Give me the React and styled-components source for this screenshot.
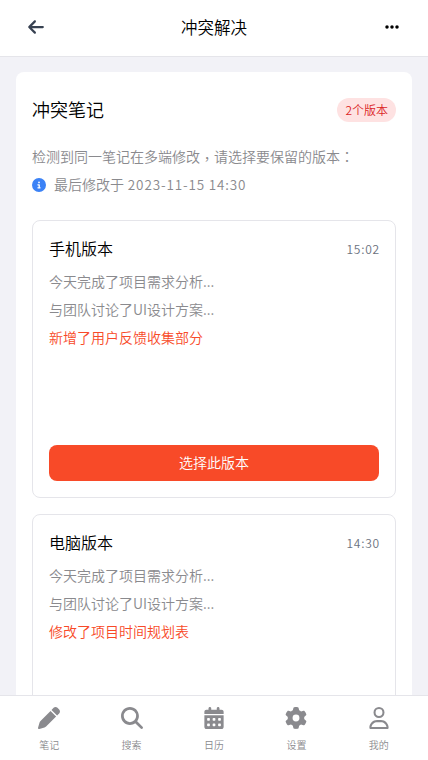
import React from 'react'
import styled, { createGlobalStyle } from 'styled-components'
import {
  FaArrowLeft,
  FaCalendarDays,
  FaCircleInfo,
  FaEllipsis,
  FaGear,
  FaMagnifyingGlass,
  FaPen,
  FaRegUser,
} from 'react-icons/fa6'

const GlobalStyle = createGlobalStyle`
  * {
    box-sizing: border-box;
  }
  body {
    margin: 0;
    background: #f2f2f7;
    color: #000;
    font-family: "Noto Sans CJK SC", sans-serif;
    font-weight: 350;
  }
`

const Screen = styled.div`
  display: flex;
  flex-direction: column;
  height: 760px;
  overflow: hidden;
`
const Header = styled.header`
  display: flex;
  flex: none;
  align-items: center;
  justify-content: space-between;
  height: 57px;
  padding: 0 28px 2px 27px;
  background: #fff;
  border-bottom: 1px solid #e5e5ea;
`
const HeaderTitle = styled.h1`
  margin: 0 1px 0 0;
  font-size: 16.5px;
  font-weight: 350;
  line-height: 24px;
`
const IconButton = styled.button`
  display: flex;
  padding: 0;
  border: none;
  background: none;
  color: ${(props) => props.$color};
  font-size: ${(props) => props.$size}px;
`
const Main = styled.main`
  flex: 1;
  min-height: 0;
  padding: 15px 16px 0;
  overflow: hidden;
`
const Panel = styled.section`
  padding: 16px;
  background: #fff;
  border-radius: 8px;
`
const PanelHeader = styled.div`
  display: flex;
  align-items: center;
  justify-content: space-between;
  height: 44px;
  margin-bottom: 10px;
`
const PanelTitle = styled.h2`
  margin: 0;
  padding-bottom: 2px;
  font-size: 18px;
  font-weight: 350;
`
const Badge = styled.span`
  height: 24px;
  padding: 0 8px;
  border-radius: 12px;
  background: #fee2e2;
  color: #dc2626;
  font-size: 12px;
  line-height: 23px;
`
const Latin = styled.span`
  font-size: 0.965em;
  letter-spacing: 0.063em;
`
const Text = styled.p`
  display: flex;
  align-items: center;
  gap: 8px;
  height: 28px;
  margin: 0;
  color: ${(props) => (props.$changed ? '#f84a28' : '#8a8a8e')};
  font-size: 14px;
  line-height: 28px;
  white-space: pre;
`
const Comma = styled.span`
  font-family: "Noto Sans CJK TC", sans-serif;
  line-height: 1;
  vertical-align: -2px;
`
const Colon = styled.span`
  font-family: "Noto Sans CJK TC", sans-serif;
`
const InfoIcon = styled(FaCircleInfo)`
  margin-top: 1px;
  color: #3b82f6;
  font-size: 14px;
`
const VersionList = styled.div`
  display: flex;
  flex-direction: column;
  gap: 16px;
  margin-top: 22px;
`
const VersionCard = styled.article`
  display: flex;
  flex-direction: column;
  height: 278px;
  padding: 15px 16px 16px;
  border: 1px solid #e5e5ea;
  border-radius: 8px;
`
const VersionHeader = styled.div`
  display: flex;
  align-items: center;
  justify-content: space-between;
  height: 24px;
  margin-bottom: 7px;
`
const VersionTitle = styled.h3`
  margin: 0;
  font-size: 16px;
  font-weight: 350;
`
const Time = styled.time`
  margin-right: -1px;
  color: #6b7280;
  font-size: 12.5px;
`
const SelectButton = styled.button`
  height: 36px;
  margin-top: auto;
  padding: 0 0 3px;
  border: none;
  border-radius: 8px;
  background: #f84a28;
  color: #fff;
  font: inherit;
  font-size: 14px;
`
const TabBar = styled.nav`
  display: flex;
  flex: none;
  height: 65px;
  padding: 0 8px;
  background: #fff;
  border-top: 1px solid #e5e5ea;
`
const Tab = styled.a`
  display: flex;
  flex: 1;
  flex-direction: column;
  align-items: center;
  gap: 8px;
  padding-top: 11px;
  color: #8a8a8e;
  font-size: 10px;
  line-height: 16px;

  svg {
    font-size: 22px;
  }
`

const versions = [
  { title: '手机版本', time: '15:02', change: '新增了用户反馈收集部分' },
  { title: '电脑版本', time: '14:30', change: '修改了项目时间规划表' },
]

const tabs = [
  { label: '笔记', Icon: FaPen },
  { label: '搜索', Icon: FaMagnifyingGlass },
  { label: '日历', Icon: FaCalendarDays },
  { label: '设置', Icon: FaGear },
  { label: '我的', Icon: FaRegUser },
]

const Version = ({ title, time, change }) => (
  <VersionCard>
    <VersionHeader>
      <VersionTitle>{title}</VersionTitle>
      <Time><Latin>{time}</Latin></Time>
    </VersionHeader>
    <Text>今天完成了项目需求分析...</Text>
    <Text>与团队讨论了UI设计方案...</Text>
    <Text $changed>{change}</Text>
    <SelectButton>选择此版本</SelectButton>
  </VersionCard>
)

const App = () => {
  return (
    <Screen>
      <GlobalStyle />
      <Header>
        <IconButton $color="#374151" $size={18}><FaArrowLeft /></IconButton>
        <HeaderTitle>冲突解决</HeaderTitle>
        <IconButton $color="#000" $size={16}><FaEllipsis /></IconButton>
      </Header>
      <Main>
        <Panel>
          <PanelHeader>
            <PanelTitle>冲突笔记</PanelTitle>
            <Badge>2个版本</Badge>
          </PanelHeader>
          <Text>
            <span>检测到同一笔记在多端修改<Comma>，</Comma>请选择要保留的版本<Colon>：</Colon></span>
          </Text>
          <Text>
            <InfoIcon />
            <span>最后修改于<Latin> 2023-11-15 14:30</Latin></span>
          </Text>
          <VersionList>
            {versions.map((version) => (
              <Version key={version.title} {...version} />
            ))}
          </VersionList>
        </Panel>
      </Main>
      <TabBar>
        {tabs.map(({ label, Icon }) => (
          <Tab key={label}>
            <Icon />
            {label}
          </Tab>
        ))}
      </TabBar>
    </Screen>
  )
}

export default App
